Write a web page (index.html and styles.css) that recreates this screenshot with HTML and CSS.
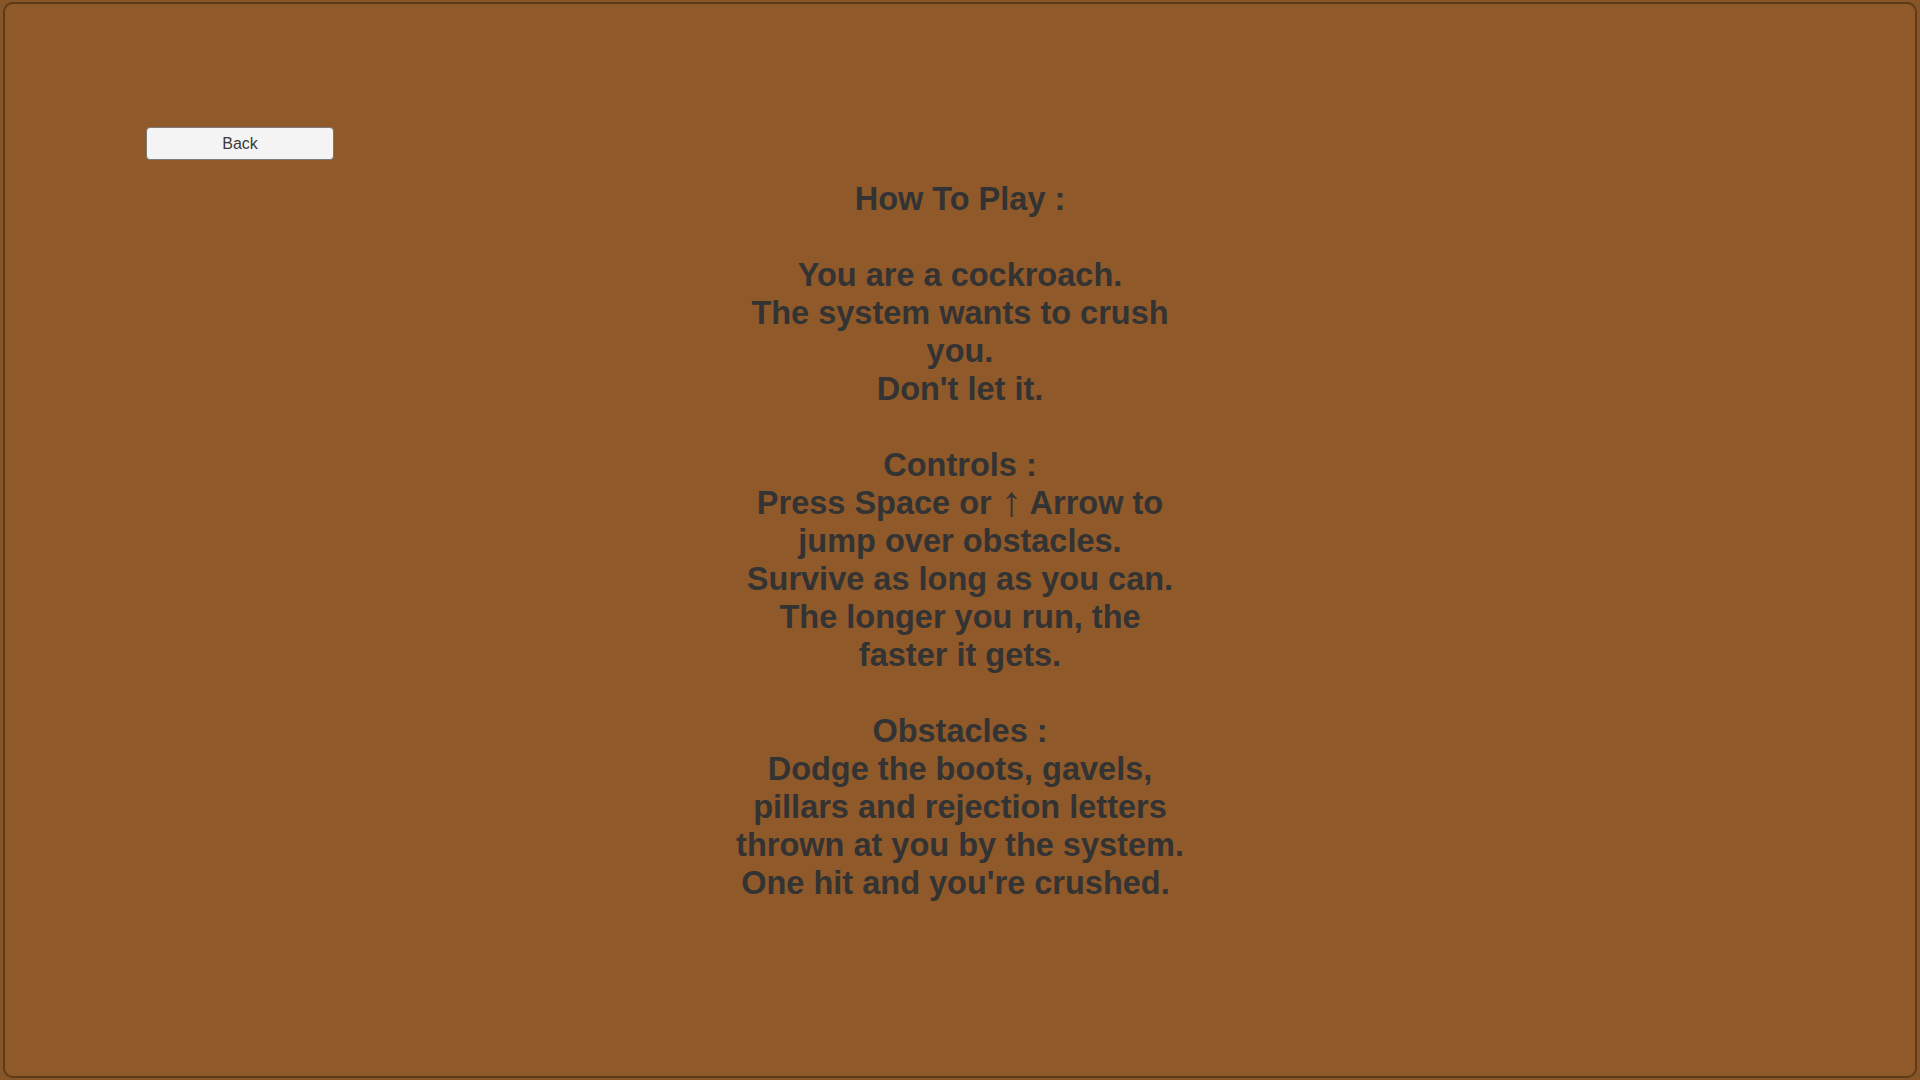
FILE: index.html
```html
<!DOCTYPE html>
<html lang="en">
<head>
<meta charset="utf-8">
<title>How To Play</title>
<link rel="stylesheet" href="styles.css">
</head>
<body>
<div class="frame">
  <div class="toolbar">
    <button class="back-btn" type="button">Back</button>
  </div>
  <div class="instructions">
    <p class="line">How To Play :</p>
    <p class="line blank">&nbsp;</p>
    <p class="line">You are a cockroach.</p>
    <p class="line">The system wants to crush</p>
    <p class="line">you.</p>
    <p class="line">Don't let it.</p>
    <p class="line blank">&nbsp;</p>
    <p class="line">Controls :</p>
    <p class="line">Press Space or <span class="arrow">↑</span> Arrow to</p>
    <p class="line">jump over obstacles.</p>
    <p class="line">Survive as long as you can.</p>
    <p class="line">The longer you run, the</p>
    <p class="line">faster it gets.</p>
    <p class="line blank">&nbsp;</p>
    <p class="line">Obstacles :</p>
    <p class="line">Dodge the boots, gavels,</p>
    <p class="line">pillars and rejection letters</p>
    <p class="line">thrown at you by the system.</p>
    <p class="line">One hit and you're crushed.&nbsp;</p>
  </div>
</div>
</body>
</html>
```

FILE: styles.css
```css
html, body {
  margin: 0;
  padding: 0;
  height: 100%;
}

body {
  background: #87552a;
  overflow: hidden;
}

.frame {
  box-sizing: border-box;
  margin: 2px 3px;
  height: calc(100vh - 4px);
  border: 2px solid #5e3b16;
  border-radius: 10px;
  background: #8f592a;
  display: flex;
  flex-direction: column;
  padding-top: 123px;
}

.toolbar {
  display: flex;
  padding-left: 141px;
}

.back-btn {
  box-sizing: border-box;
  width: 188px;
  height: 33px;
  background: #f4f4f4;
  border: 1px solid #7a7a7a;
  border-radius: 4px;
  font-family: "Liberation Sans", Arial, sans-serif;
  font-size: 16px;
  color: #3a3a3a;
  padding: 0;
  cursor: pointer;
}

.instructions {
  margin-top: 20px;
  display: flex;
  flex-direction: column;
  align-items: center;
  font-family: "Liberation Sans", Arial, sans-serif;
  font-weight: bold;
  font-size: 32.5px;
  line-height: 38px;
  color: #333333;
  text-align: center;
}

.line {
  margin: 0;
  white-space: nowrap;
}

.arrow {
  font-weight: normal;
  font-size: 42px;
  line-height: 0;
  vertical-align: -2px;
}
```
